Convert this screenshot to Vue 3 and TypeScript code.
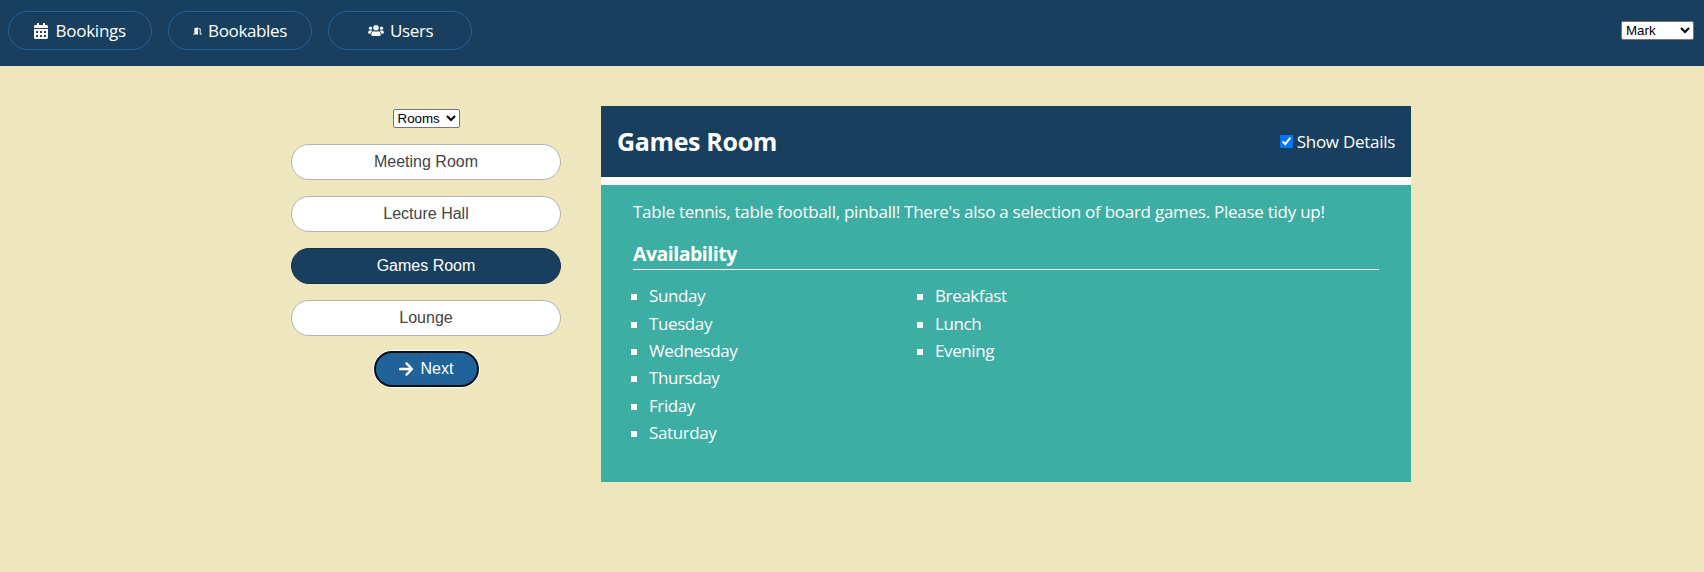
<script setup lang="ts">
import { ref } from 'vue'

const user = ref('Mark')
const group = ref('Rooms')
const showDetails = ref(true)
const selected = ref('Games Room')
const bookables = ['Meeting Room', 'Lecture Hall', 'Games Room', 'Lounge']
const days = ['Sunday', 'Tuesday', 'Wednesday', 'Thursday', 'Friday', 'Saturday']
const sessions = ['Breakfast', 'Lunch', 'Evening']
</script>

<template>
  <div class="app">
    <header class="topbar">
      <nav class="nav">
        <a class="nav-link bookings">
          <svg class="icon-calendar" viewBox="0 0 448 512" fill="currentColor">
            <path d="M0 464c0 26.500 21.500 48 48 48h352c26.500 0 48-21.500 48-48V192H0v272zm320-196c0-6.600 5.400-12 12-12h40c6.600 0 12 5.400 12 12v40c0 6.600-5.400 12-12 12h-40c-6.600 0-12-5.400-12-12v-40zm0 128c0-6.600 5.400-12 12-12h40c6.600 0 12 5.400 12 12v40c0 6.600-5.400 12-12 12h-40c-6.600 0-12-5.400-12-12v-40zM192 268c0-6.600 5.400-12 12-12h40c6.600 0 12 5.400 12 12v40c0 6.600-5.400 12-12 12h-40c-6.600 0-12-5.400-12-12v-40zm0 128c0-6.600 5.400-12 12-12h40c6.600 0 12 5.400 12 12v40c0 6.600-5.400 12-12 12h-40c-6.600 0-12-5.400-12-12v-40zM64 268c0-6.600 5.400-12 12-12h40c6.600 0 12 5.400 12 12v40c0 6.600-5.400 12-12 12H76c-6.600 0-12-5.400-12-12v-40zm0 128c0-6.600 5.400-12 12-12h40c6.600 0 12 5.400 12 12v40c0 6.600-5.400 12-12 12H76c-6.600 0-12-5.400-12-12v-40zM400 64h-48V16c0-8.800-7.200-16-16-16h-32c-8.800 0-16 7.200-16 16v48H160V16c0-8.800-7.200-16-16-16h-32c-8.800 0-16 7.200-16 16v48H48C21.500 64 0 85.500 0 112v48h448v-48c0-26.500-21.500-48-48-48z" />
          </svg>
          <span>Bookings</span>
        </a>
        <a class="nav-link bookables">
          <svg class="icon-door" viewBox="0 0 640 512" fill="currentColor">
            <path d="M624 448h-80V113.450C544 86.190 522.470 64 496 64H384v64h96v384h144c8.840 0 16-7.160 16-16v-32c0-8.840-7.160-16-16-16zM312.240 1.010l-192 49.740C105.990 54.440 96 67.700 96 82.920V448H16c-8.840 0-16 7.160-16 16v32c0 8.840 7.160 16 16 16h336V33.180c0-21.580-19.560-37.410-39.760-32.170zM264 288c-13.250 0-24-14.330-24-32s10.750-32 24-32 24 14.330 24 32-10.750 32-24 32z" />
          </svg>
          <span>Bookables</span>
        </a>
        <a class="nav-link users">
          <svg class="icon-users" viewBox="0 0 640 448" fill="currentColor">
            <circle cx="96" cy="128" r="64" />
            <circle cx="544" cy="128" r="64" />
            <circle cx="320" cy="112" r="112" />
            <path d="M64 224h64c18 0 34 7 45 19-40 22-69 62-75 109H32c-18 0-32-14-32-32v-32c0-35 29-64 64-64zM512 224h64c35 0 64 29 64 64v32c0 18-14 32-32 32h-66c-6-47-35-87-75-109 11-12 27-19 45-19zM243 256h8c21 10 44 16 69 16s48-6 69-16h8c64 0 115 52 115 115v29c0 26-22 48-48 48H176c-26 0-48-22-48-48v-29c0-63 51-115 115-115z" />
          </svg>
          <span>Users</span>
        </a>
      </nav>
      <select v-model="user" class="user-picker">
        <option>Mark</option>
      </select>
    </header>

    <main class="page">
      <section class="picker">
        <select v-model="group" class="group-picker">
          <option>Rooms</option>
        </select>
        <ul class="rooms">
          <li v-for="room in bookables" :key="room">
            <button class="room" :class="{ selected: room === selected }" @click="selected = room">{{ room }}</button>
          </li>
        </ul>
        <button class="next">
          <svg class="icon-arrow" viewBox="0 0 14 14" fill="none" stroke="currentColor" stroke-width="2.300" stroke-linecap="round" stroke-linejoin="round">
            <path d="M1 7h11.500M7.500 1.400L13 7l-5.500 5.600" />
          </svg>
          <span>Next</span>
        </button>
      </section>

      <section class="details">
        <div class="details-head">
          <h2>{{ selected }}</h2>
          <label class="toggle">
            <input v-model="showDetails" type="checkbox">
            <span>Show Details</span>
          </label>
        </div>
        <div class="details-body">
          <p>Table tennis, table football, pinball! There's also a selection of board games. Please tidy up!</p>
          <template v-if="showDetails">
            <h3><span>Availability</span></h3>
            <div class="availability">
              <ul><li v-for="day in days" :key="day">{{ day }}</li></ul>
              <ul><li v-for="session in sessions" :key="session">{{ session }}</li></ul>
            </div>
          </template>
        </div>
      </section>
    </main>
  </div>
</template>

<style>
html, body { margin: 0; background: #eee6bd; }
</style>

<style scoped>
.app {
  min-height: 572px;
  background: #eee6bd;
  color: #fff;
  font: 17px/24px "Open Sans", "Noto Sans", sans-serif;
}
.topbar {
  box-sizing: border-box;
  height: 66px;
  padding: 11px 10px 0 8px;
  display: flex;
  justify-content: space-between;
  align-items: flex-start;
  background: #193f5f;
}
.nav { display: flex; gap: 16px; }
.nav-link {
  box-sizing: border-box;
  width: 144px;
  height: 39px;
  display: flex;
  align-items: center;
  border: 1px solid #20639b;
  border-radius: 20px;
  padding-left: 24px;
  letter-spacing: -0.25px;
}
.icon-calendar { width: 14px; height: 16px; margin: 0 7.5px 0 1px; }
.bookables { letter-spacing: -0.35px; }
.icon-door { width: 9px; height: 8px; margin-right: 6px; }
.icon-users { width: 16px; height: 11px; margin-right: 6px; }
.users { padding-left: 39px; letter-spacing: -0.35px; }
select {
  box-sizing: border-box;
  height: 19px;
  margin: 0;
  font: 13.333px "Liberation Sans", Arial, sans-serif;
  color: #000;
  background: #fff;
  border: 1px solid #767676;
  border-radius: 2px;
  padding: 0;
}
.user-picker { width: 73px; margin-top: 10px; }
.page {
  display: grid;
  grid-template-columns: 270px 810px;
  gap: 40px;
  padding: 40px 0 0 291px;
  align-items: start;
}
.picker { display: flex; flex-direction: column; align-items: center; padding-top: 3px; }
.group-picker { width: 67px; }
.rooms {
  width: 100%;
  margin: 16px 0 15px;
  padding: 0;
  list-style: none;
  display: grid;
  gap: 16px;
}
.rooms li { display: flex; }
button { font: 16px/18px "Liberation Sans", Arial, sans-serif; box-sizing: border-box; height: 36px; padding: 0; }
.room {
  width: 100%;
  color: #444;
  background: #fff;
  border: 1px solid #b3b3b3;
  border-radius: 18px;
}
.room.selected { color: #fff; background: #193f5f; border-color: #15324b; }
.next {
  width: 105px;
  display: flex;
  align-items: center;
  padding-left: 23px;
  color: #fff;
  background: #20639b;
  border: 2px solid #101010;
  border-radius: 18px;
  box-shadow: 0 0 0 1px #fff;
}
.icon-arrow { width: 14px; height: 14px; margin-right: 8px; }
.details-head {
  box-sizing: border-box;
  height: 79px;
  padding: 0 16px;
  display: flex;
  justify-content: space-between;
  align-items: center;
  background: #193f5f;
  border-bottom: 8px solid #fff;
}
h2 { margin: 0; padding-bottom: 2px; font-size: 25px; line-height: 36px; font-weight: 700; letter-spacing: -0.35px; }
.toggle { display: flex; align-items: center; gap: 4px; letter-spacing: -0.28px; }
.toggle input { width: 13px; height: 13px; margin: 0; }
.details-body {
  box-sizing: border-box;
  height: 297px;
  padding: 15px 32px 0;
  background: #3caea3;
}
p { margin: 0; white-space: nowrap; letter-spacing: -0.26px; }
h3 {
  margin: 15px 0 0;
  height: 30px;
  border-bottom: 1px solid #fff;
  font-size: 19.5px;
  line-height: 30px;
  font-weight: 700;
  letter-spacing: -0.5px;
}
.availability { display: grid; grid-template-columns: 286px 1fr; padding-top: 12.5px; }
.availability ul { margin: 0; padding: 0 0 0 16px; list-style: none; }
.availability li {
  display: flex;
  align-items: center;
  height: 27.4px;
  letter-spacing: -0.4px;
}
.availability li::before { content: ""; width: 6px; height: 6px; margin: 2px 12px 0 -18px; background: #fff; }
</style>
